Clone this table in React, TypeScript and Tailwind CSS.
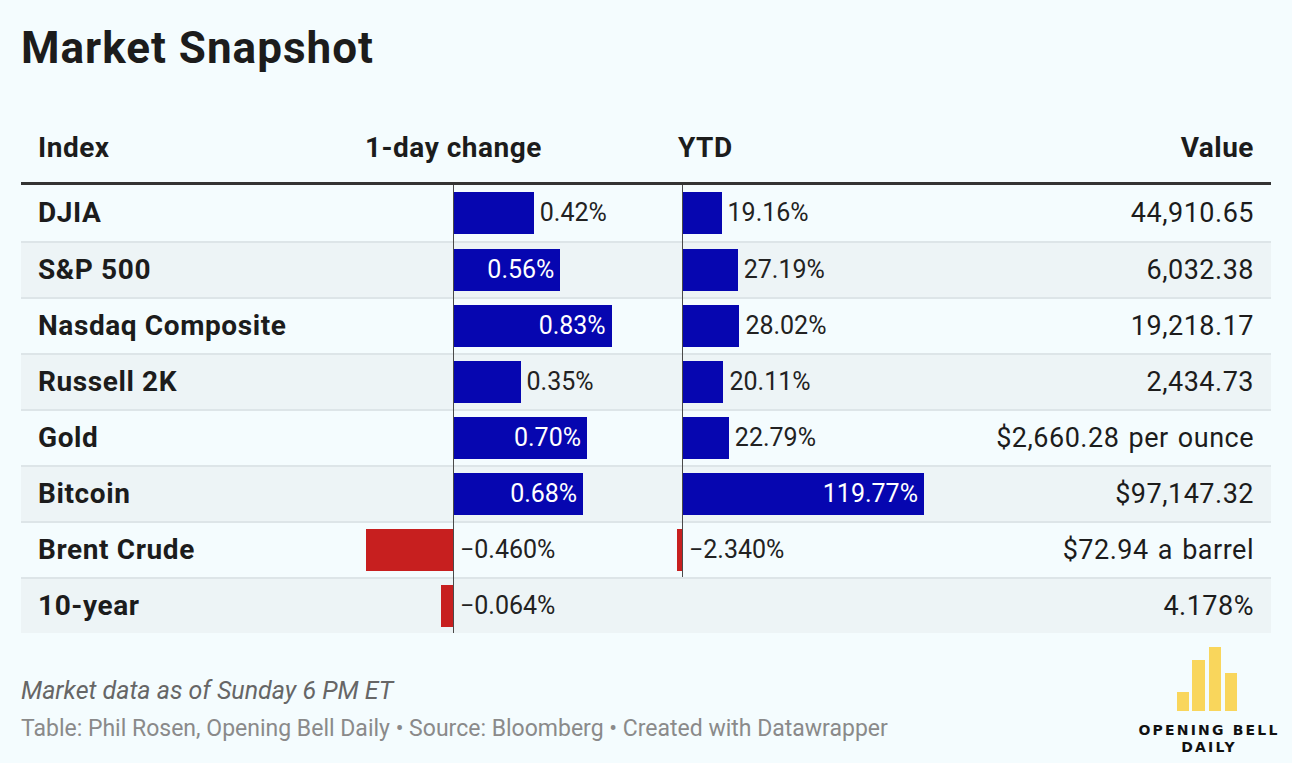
import React from 'react'

type Row = {
  name: string
  day: number
  dayLabel: string
  dayInside?: boolean
  ytd?: number
  ytdLabel?: string
  ytdInside?: boolean
  value: string
}

const rows: Row[] = [
  { name: 'DJIA', day: 0.42, dayLabel: '0.42%', ytd: 19.16, ytdLabel: '19.16%', value: '44,910.65' },
  { name: 'S&P 500', day: 0.56, dayLabel: '0.56%', dayInside: true, ytd: 27.19, ytdLabel: '27.19%', value: '6,032.38' },
  { name: 'Nasdaq Composite', day: 0.83, dayLabel: '0.83%', dayInside: true, ytd: 28.02, ytdLabel: '28.02%', value: '19,218.17' },
  { name: 'Russell 2K', day: 0.35, dayLabel: '0.35%', ytd: 20.11, ytdLabel: '20.11%', value: '2,434.73' },
  { name: 'Gold', day: 0.7, dayLabel: '0.70%', dayInside: true, ytd: 22.79, ytdLabel: '22.79%', value: '$2,660.28 per ounce' },
  { name: 'Bitcoin', day: 0.68, dayLabel: '0.68%', dayInside: true, ytd: 119.77, ytdLabel: '119.77%', ytdInside: true, value: '$97,147.32' },
  { name: 'Brent Crude', day: -0.46, dayLabel: '\u22120.460%', ytd: -2.34, ytdLabel: '\u22122.340%', value: '$72.94 a barrel' },
  { name: '10-year', day: -0.064, dayLabel: '\u22120.064%', value: '4.178%' },
]

// px per percentage point
const DAY_SCALE = 190
const YTD_SCALE = 2.012

function BarCell({
  v,
  label,
  inside,
  scale,
  negWidth,
  first,
}: {
  v: number
  label: string
  inside?: boolean
  scale: number
  negWidth: string
  first: boolean
}) {
  const w = Math.abs(v) * scale
  return (
    <div className="flex h-full items-center">
      <div className={`flex ${negWidth} shrink-0 justify-end`}>
        {v < 0 && <div className="h-[42px] bg-[#c71f1f]" style={{ width: w }} />}
      </div>
      <div className={`w-px self-stretch bg-[#4a4a4a] ${first ? '' : '-mt-[2px]'}`} />
      {v >= 0 ? (
        inside ? (
          <div
            className="flex h-[42px] items-center justify-end bg-[#0606b0] pr-[6px] text-[25px] text-white"
            style={{ width: w }}
          >
            {label}
          </div>
        ) : (
          <>
            <div className="h-[42px] bg-[#0606b0]" style={{ width: w }} />
            <span className="ml-[6px] text-[25px] text-[#222]">{label}</span>
          </>
        )
      ) : (
        <span className="ml-[6px] text-[25px] text-[#222]">{label}</span>
      )}
    </div>
  )
}

function Logo() {
  return (
    <div className="mt-[14px] flex w-[146px] flex-col items-center">
      <svg width="62" height="64" viewBox="0 0 62 64" className="ml-[-2px]">
        <rect x="0" y="45" width="12" height="19" fill="#f9d65c" />
        <rect x="15" y="13" width="13" height="51" fill="#f9d65c" />
        <rect x="32" y="0" width="12" height="64" fill="#f9d65c" />
        <rect x="48" y="26" width="12" height="38" fill="#f9d65c" />
      </svg>
      <div className="mt-[11px] text-center font-['DejaVu_Sans',sans-serif] text-[14px] font-bold leading-[17px] tracking-[2.2px] text-[#111]">
        <div>OPENING BELL</div>
        <div>DAILY</div>
      </div>
    </div>
  )
}

export default function App() {
  return (
    <div className="h-[763px] w-[1292px] bg-[#f4fcfe] pl-[21px] font-[Roboto,sans-serif] text-[#1c1c1c]">
      <h1 className="pt-[22px] text-[44px] font-bold leading-[52px] tracking-[1px]">Market Snapshot</h1>

      <div className="w-[1250px]">
        <div className="grid h-[111px] grid-cols-[344px_312px_300px_1fr] items-end border-b-[3px] border-[#333] pb-[16px] text-[28px] font-bold leading-[36px] tracking-[0.5px]">
          <div className="pl-[17px]">Index</div>
          <div>1-day change</div>
          <div className="pl-px">YTD</div>
          <div className="pr-[17px] text-right">Value</div>
        </div>

        {rows.map((r, i) => (
          <div
            key={r.name}
            className={`grid h-[56px] grid-cols-[344px_312px_300px_1fr] items-center ${
              i > 0 ? 'border-t-2 border-[#dde5e8]' : ''
            } ${i % 2 === 1 ? 'bg-[#edf4f6]' : ''}`}
          >
            <div className="pl-[17px] text-[28px] font-bold tracking-[0.6px]">{r.name}</div>
            <BarCell
              v={r.day}
              label={r.dayLabel}
              inside={r.dayInside}
              scale={DAY_SCALE}
              negWidth="w-[88px]"
              first={i === 0}
            />
            {r.ytd !== undefined && r.ytdLabel ? (
              <BarCell
                v={r.ytd}
                label={r.ytdLabel}
                inside={r.ytdInside}
                scale={YTD_SCALE}
                negWidth="w-[5px]"
                first={i === 0}
              />
            ) : (
              <div />
            )}
            <div className="pr-[17px] text-right text-[27px] tracking-[0.5px] [word-spacing:2px]">{r.value}</div>
          </div>
        ))}
      </div>

      <div className="flex w-[1261px] items-start justify-between">
        <div className="mt-[42px]">
          <div className="text-[25px] italic leading-[32px] text-[#666]">Market data as of Sunday 6 PM ET</div>
          <div className="mt-[7px] text-[23px] leading-[30px] text-[#8a8a8a]">
            Table: Phil Rosen, Opening Bell Daily • Source: Bloomberg • Created with Datawrapper
          </div>
        </div>
        <Logo />
      </div>
    </div>
  )
}
